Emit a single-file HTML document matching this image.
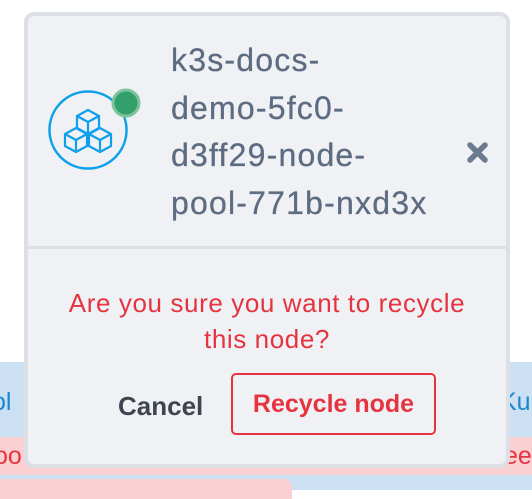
<!DOCTYPE html>
<html><head><meta charset="utf-8"><style>
*{margin:0;padding:0;box-sizing:border-box}
body{width:532px;height:490px;overflow:hidden;background:#fff;position:relative;font-family:"Liberation Sans",sans-serif}
.abs{position:absolute}
.card{position:absolute;left:24px;top:12px;width:486px;height:456px;background:#f0f1f5;border:4px solid #dcdfe6;border-radius:10px}
.name{position:absolute;left:143px;top:21px;font-size:32px;line-height:47.7px;color:#5d6c81;letter-spacing:1.2px;-webkit-text-stroke:0.3px #5d6c81}
.q{position:absolute;left:0;width:478px;top:269px;text-align:center;font-size:26px;line-height:36px;color:#e5343f;letter-spacing:0.6px}
</style></head><body>
<div class="abs" style="left:0;top:362px;width:532px;height:75px;background:#cbe0f2"></div>
<div class="abs" style="left:0;top:437px;width:532px;height:38px;background:#fbd0d2"></div>
<div class="abs" style="left:0;top:475px;width:532px;height:15px;background:#cbe0f2"></div>
<div class="abs" style="left:0;top:479px;width:292px;height:20px;background:#fbd0d2;border-radius:0 8px 0 0"></div>
<div class="abs" style="left:-8px;top:388px;font-size:25px;color:#1a86d0">ol</div>
<div class="abs" style="left:500px;top:388px;font-size:25px;color:#1a86d0">Ku</div>
<div class="abs" style="left:-6px;top:442px;font-size:25px;color:#e5343f">oo</div>
<div class="abs" style="left:504px;top:442px;font-size:25px;color:#e5343f">ee</div>
<div class="card">
<svg class="abs" style="left:0;top:0" width="478" height="448" viewBox="28 16 478 448">
<circle cx="88" cy="130" r="38.5" fill="none" stroke="#0ea0ea" stroke-width="2.5"/>
<g fill="none" stroke="#0ea0ea" stroke-width="2.2" stroke-linejoin="round">
<path d="M88 110 L99 116 L88 122 L77 116 Z M77 116 V128 L88 134 L99 128 V116 M88 122 V134"/>
<path d="M76 128 L87 134 L76 140 L65 134 Z M65 134 V146 L76 152 L87 146 V134 M76 140 V152"/>
<path d="M100 128 L111 134 L100 140 L89 134 Z M89 134 V146 L100 152 L111 146 V134 M100 140 V152"/>
</g>
<circle cx="126" cy="103" r="13" fill="#33a06b" stroke="#7cc49c" stroke-width="3"/>
<path d="M470 145 L485 160 M485 145 L470 160" stroke="#6b7a8d" stroke-width="5.5" stroke-linecap="round"/>
<rect x="28" y="246" width="478" height="3" fill="#dcdfe6"/>
</svg>
<div class="name">k3s-docs-<br>demo-5fc0-<br>d3ff29-node-<br>pool-771b-nxd3x</div>
<div class="q">Are you sure you want to recycle<br>this node?</div>
<div class="abs" style="left:90px;top:375px;font-size:26px;font-weight:bold;color:#3d4551">Cancel</div>
<div class="abs" style="left:203px;top:357px;width:205px;height:62px;border:2px solid #e5343f;border-radius:5px;font-size:25px;font-weight:bold;color:#e5343f;text-align:center;line-height:58px">Recycle node</div>
</div>
</body></html>
